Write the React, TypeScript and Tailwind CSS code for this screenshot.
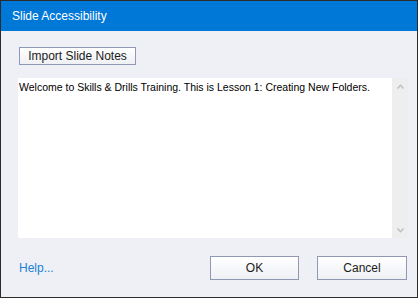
const ui = "font-['Liberation_Sans',Arial,sans-serif]";

function Chevron({ up }: { up?: boolean }) {
  return (
    <svg width="7" height="5" viewBox="0 0 7 5" className="block">
      <path
        d={up ? 'M0.5 4.5 L3.5 1.2 L6.5 4.5' : 'M0.5 0.5 L3.5 3.8 L6.5 0.5'}
        fill="none"
        stroke="#bdbdbd"
        strokeWidth="1.4"
      />
    </svg>
  );
}

function DialogButton({ label, w }: { label: string; w: string }) {
  return (
    <button
      className={`${w} h-[24px] border border-[#9098b3] bg-linear-to-b from-white to-[#eef0f4] text-[12px] text-[#1b1b1b] leading-none`}
    >
      {label}
    </button>
  );
}

export default function App() {
  return (
    <div className={`${ui} w-[418px] h-[298px] flex flex-col border border-[#2b2b2b] bg-[#eff0f5]`}>
      {/* Title bar */}
      <div className="h-[30px] bg-[#0078d7] text-white text-[12px] pl-[11px] flex items-center shrink-0">
        Slide Accessibility
      </div>

      <div className="flex-1 flex flex-col pl-[17px] pr-[9px] pt-[16px]">
        <button className="ml-[1px] w-[117px] h-[18px] border border-[#9098b3] bg-linear-to-b from-white to-[#eef0f4] text-[12px] text-[#1b1b1b] leading-none">
          Import Slide Notes
        </button>

        {/* Notes box */}
        <div className="mt-[13px] h-[160px] flex">
          <div className="w-[374px] bg-white pl-[1px] pt-[1px] text-[10.5px] leading-[16px] text-black whitespace-nowrap overflow-hidden">
            Welcome to Skills &amp; Drills Training. This is Lesson 1: Creating New Folders.
          </div>
          <div className="w-[16px] bg-[#eeeeee] flex flex-col items-center justify-between pt-[6px] pb-[5px] pl-[1px]">
            <Chevron up />
            <Chevron />
          </div>
        </div>

        {/* Footer */}
        <div className="mt-[18px] flex items-center">
          <a className="ml-[1px] text-[12px] text-[#1a80d6]">Help...</a>
          <div className="ml-auto flex gap-[18px] mr-[1px]">
            <DialogButton label="OK" w="w-[89px]" />
            <DialogButton label="Cancel" w="w-[90px]" />
          </div>
        </div>
      </div>
    </div>
  );
}
